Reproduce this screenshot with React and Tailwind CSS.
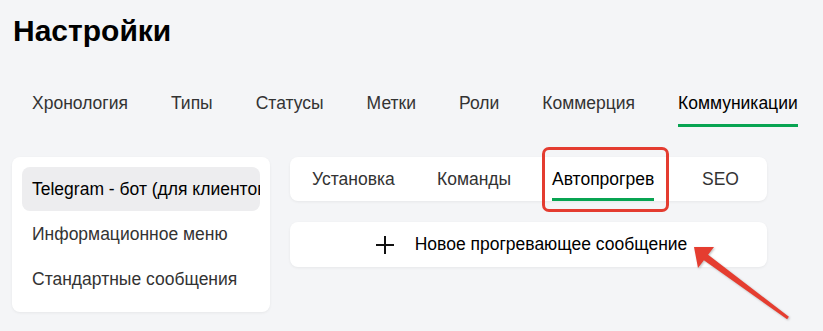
import React from "react";

const topTabs = ["Хронология", "Типы", "Статусы", "Метки", "Роли", "Коммерция", "Коммуникации"];
const subTabs = [
  { t: "Установка", w: "w-[125px]" },
  { t: "Команды", w: "w-[115px]" },
  { t: "Автопрогрев", w: "w-[150px]" },
  { t: "SEO", w: "w-[60px]" },
];
const sideItems = ["Telegram - бот (для клиентов)", "Информационное меню", "Стандартные сообщения"];

export default function App() {
  return (
    <div
      className="relative w-[823px] h-[331px] overflow-hidden bg-[#f4f5f7] text-[#333]"
      style={{ fontFamily: '"Liberation Sans", Arial, sans-serif' }}
    >
      <div className="pl-[13px] pt-[13px]">
        <h1 className="text-[30px] leading-[36px] font-bold text-black">Настройки</h1>
      </div>

      <div className="mt-[44px] flex gap-[43px] pl-[32px] text-[17.5px] leading-[20px]">
        {topTabs.map((t, i) => {
          const active = i === topTabs.length - 1;
          return (
            <div
              key={t}
              className={
                active
                  ? "pb-[11px] border-b-[3px] border-[#08a452] text-black"
                  : "pb-[11px] border-b-[3px] border-transparent"
              }
            >
              {t}
            </div>
          );
        })}
      </div>

      <div className="mt-[30px] flex gap-[20px] pl-[12px]">
        <div className="w-[258px] h-[155px] bg-white rounded-[8px] p-[10px] shadow-[0_1px_3px_rgba(0,0,0,0.06)] flex flex-col">
          {sideItems.map((t, i) => (
            <div
              key={t}
              className={
                i === 0
                  ? "h-[44px] mb-[1px] flex items-center pl-[10px] rounded-[8px] bg-[#ededef] text-black whitespace-nowrap overflow-hidden text-[17.5px]"
                  : "h-[45px] flex items-center pl-[10px] whitespace-nowrap overflow-hidden text-[17.5px]"
              }
            >
              {t}
            </div>
          ))}
        </div>

        <div className="w-[477px] flex flex-col gap-[21px]">
          <div className="h-[44px] bg-white rounded-[8px] shadow-[0_1px_3px_rgba(0,0,0,0.06)] flex items-stretch pl-[22px] text-[17.5px]">
            {subTabs.map((s, i) => {
              const active = i === 2;
              return (
                <div key={s.t} className={s.w + " flex items-stretch"}>
                  <div
                    className={
                      active
                        ? "relative flex items-center border-b-[3px] border-[#08a452] text-black pt-[3px]"
                        : "relative flex items-center border-b-[3px] border-transparent pt-[3px]"
                    }
                  >
                    {s.t}
                    {active && (
                      <div className="absolute left-[-10px] right-[-15px] top-[-10px] bottom-[-14px] border-[3.5px] border-[#e43c30] rounded-[7px]" />
                    )}
                  </div>
                </div>
              );
            })}
          </div>

          <div className="h-[45px] bg-white rounded-[8px] shadow-[0_1px_3px_rgba(0,0,0,0.06)] flex items-center justify-center gap-[21px] pl-[6px] text-[17.5px] text-black">
            <svg width="18" height="18" viewBox="0 0 18 18" className="shrink-0">
              <path d="M9 0v18M0 9h18" stroke="#111" strokeWidth="2" />
            </svg>
            <span>Новое прогревающее сообщение</span>
          </div>
        </div>
      </div>

      <svg
        className="absolute left-0 top-0 pointer-events-none"
        width="823"
        height="331"
        viewBox="0 0 823 331"
        style={{ filter: "drop-shadow(1px 1px 1px rgba(0,0,0,0.25))" }}
      >
        <polygon
          points="694,247 714,247 708.1,254.7 788.9,316.8 787.1,319.2 703.9,260.3 698,268"
          fill="#e53d30"
        />
      </svg>
    </div>
  );
}
